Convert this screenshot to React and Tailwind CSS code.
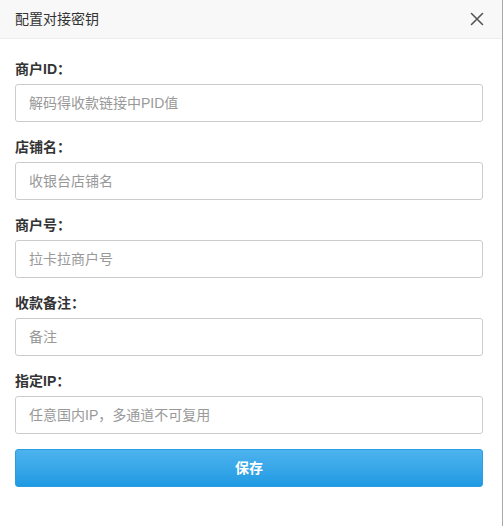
import React from "react";

const fields = [
  { label: "商户ID：", placeholder: "解码得收款链接中PID值" },
  { label: "店铺名：", placeholder: "收银台店铺名" },
  { label: "商户号：", placeholder: "拉卡拉商户号" },
  { label: "收款备注：", placeholder: "备注" },
  { label: "指定IP：", placeholder: "任意国内IP，多通道不可复用" },
];

export default function App() {
  return (
    <div
      className="w-[504px] h-[526px] bg-white"
      style={{ fontFamily: '"Liberation Sans", "Noto Sans CJK SC", sans-serif' }}
    >
      <div className="w-[503px] h-full border-r border-[#a9a9a9] flex flex-col">
        {/* Header */}
        <div className="h-[39px] bg-[#f8f8f8] border-b border-[#ececec] flex items-center justify-between pl-[15px] pr-[18px]">
          <span className="text-[14px] text-[#333]">配置对接密钥</span>
          <svg width="14" height="14" viewBox="0 0 14 14" className="mt-[-1px]">
            <path d="M1.5 1.5 L12.5 12.5 M12.5 1.5 L1.5 12.5" stroke="#555" strokeWidth="1.6" strokeLinecap="round" />
          </svg>
        </div>

        {/* Form */}
        <div className="pt-[20px] pl-[15px] w-[483px]">
          {fields.map((f) => (
            <div key={f.label} className="mb-[15px]">
              <div className="h-[20px] leading-[20px] text-[14px] font-bold text-[#333] mb-[5px]">
                {f.label}
              </div>
              <input
                type="text"
                placeholder={f.placeholder}
                className="w-full h-[38px] border border-[#ccc] rounded-[3px] px-[13px] text-[14px] text-[#333] placeholder:text-[#999] outline-none"
              />
            </div>
          ))}
          <button
            type="button"
            className="w-full h-[38px] rounded-[3px] text-white text-[14px] font-bold bg-gradient-to-b from-[#4cb3ee] to-[#1e9ae2] border border-[#2a9ee0]"
          >
            保存
          </button>
        </div>
      </div>
    </div>
  );
}
